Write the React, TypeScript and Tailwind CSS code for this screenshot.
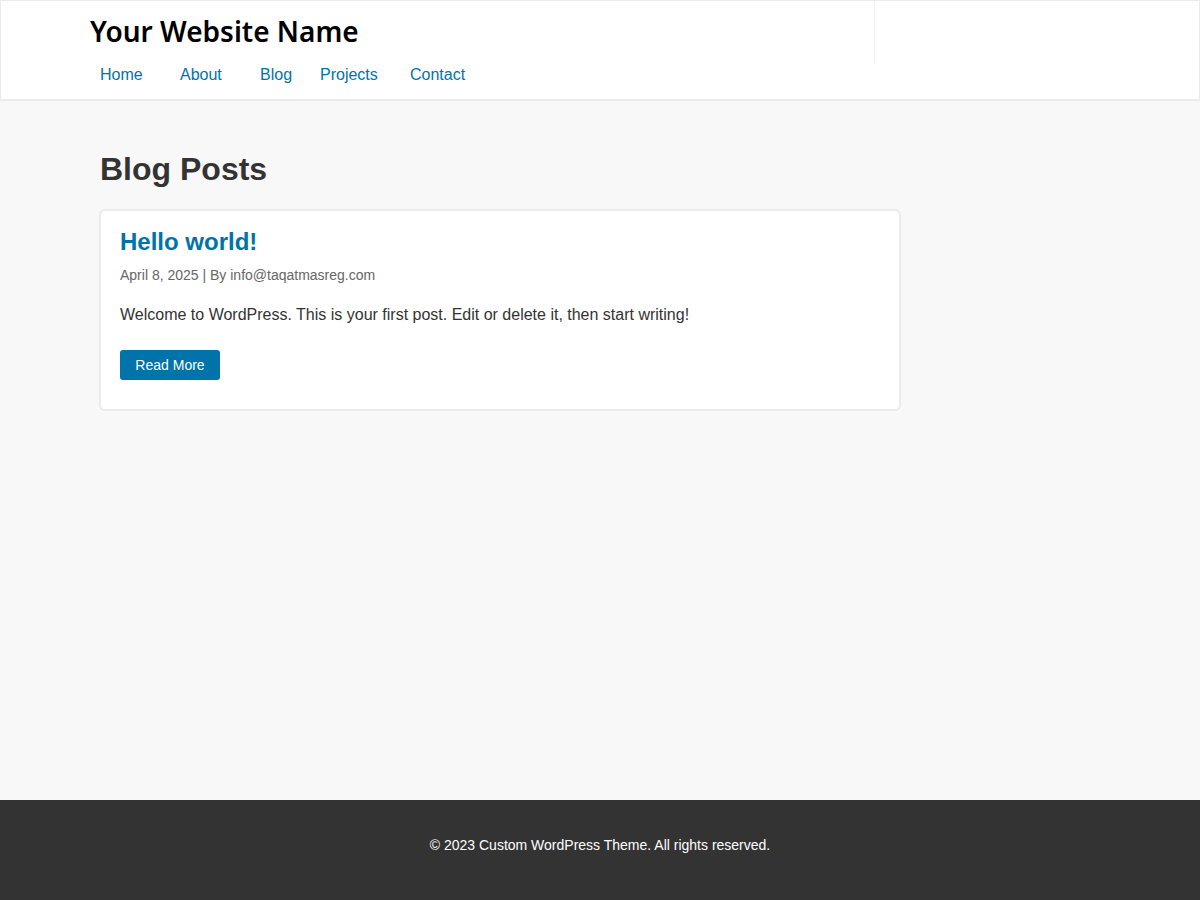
const links = [
  { label: "Home", width: "w-20" },
  { label: "About", width: "w-20" },
  { label: "Blog", width: "w-[60px]" },
  { label: "Projects", width: "w-[90px]" },
  { label: "Contact", width: "w-20" },
];

export default function App() {
  return (
    <div className="flex min-h-screen flex-col bg-[#f8f8f8] font-['Liberation_Sans',Arial,sans-serif] text-[#333333]">
      <header className="relative border border-b-2 border-[#ebebeb] bg-white pb-3">
        <div className="absolute right-[324px] top-0 h-[62px] w-px bg-[#f3f3f3]" />
        <p className="pl-[89px] pt-3 font-['Noto_Sans',sans-serif] text-[28px] font-semibold leading-9 text-black">
          Your Website Name
        </p>
        <nav className="flex pl-[99px] pt-[14px]">
          {links.map((link) => (
            <a key={link.label} href="#" className={`${link.width} shrink-0 text-base leading-6 text-[#0073aa]`}>
              {link.label}
            </a>
          ))}
        </nav>
      </header>
      <main className="flex-1 px-[99px] pt-12">
        <h1 className="pl-px text-[32px] font-bold leading-10">Blog Posts</h1>
        <article className="mt-5 max-w-[802px] rounded-md border-2 border-[#ebebeb] bg-white px-[19px] pb-[29px] pt-[15px]">
          <h2 className="text-2xl font-bold leading-8 text-[#0073aa]">
            <a href="#">Hello world!</a>
          </h2>
          <p className="mt-[7px] text-sm leading-5 text-[#666666]">April 8, 2025 | By info@taqatmasreg.com</p>
          <p className="mt-[18px] text-base leading-6">
            Welcome to WordPress. This is your first post. Edit or delete it, then start writing!
          </p>
          <a href="#" className="mt-[23px] flex h-[30px] w-[100px] items-center justify-center rounded-[3px] bg-[#0073aa] text-sm text-white">
            Read More
          </a>
        </article>
      </main>
      <footer className="h-[100px] bg-[#333333] pt-[35px] text-center text-sm leading-5 text-white">
        © 2023 Custom WordPress Theme. All rights reserved.
      </footer>
    </div>
  );
}
